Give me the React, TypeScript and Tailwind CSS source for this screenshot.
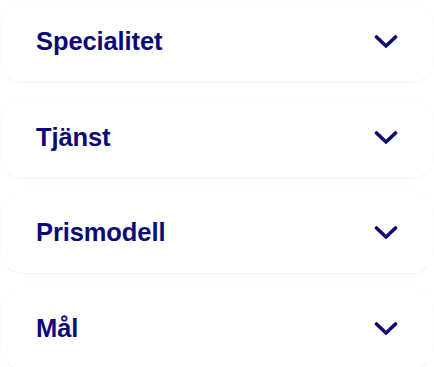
const items = ['Specialitet', 'Tjänst', 'Prismodell', 'Mål']

function Chevron() {
  return (
    <svg width="24" height="15" viewBox="0 0 24 15" fill="none" className="text-[#0b0a78]">
      <polyline points="2.5,3 12,12 21.5,3" stroke="currentColor" strokeWidth="3.6" strokeLinecap="round" strokeLinejoin="round" />
    </svg>
  )
}

export default function App() {
  return (
    <div className="min-h-screen bg-white flex flex-col gap-[12.5px]" style={{ fontFamily: '"Liberation Sans", Arial, sans-serif' }}>
      {items.map((label) => (
        <button
          key={label}
          className="h-[83px] w-full flex items-center justify-between pl-[35px] pr-[35px] rounded-[22px] border border-[#fbfbfb] border-b-[#f3f3f3] bg-white text-left"
        >
          <span className="text-[25.5px] font-bold text-[#0b0a78] tracking-[-0.1px]">{label}</span>
          <Chevron />
        </button>
      ))}
    </div>
  )
}
